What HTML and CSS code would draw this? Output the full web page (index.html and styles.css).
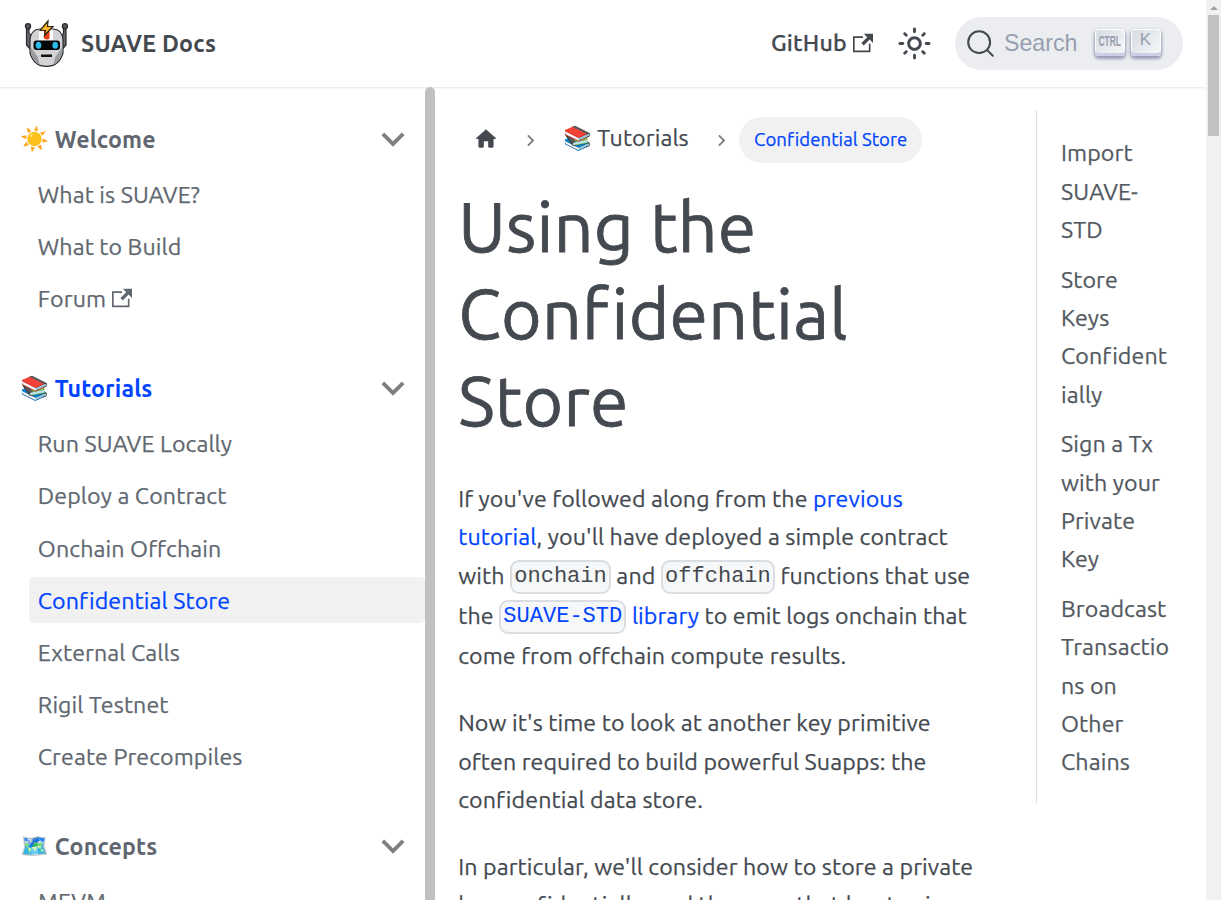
FILE: index.html
```html
<!DOCTYPE html>
<html lang="en">
<head>
<meta charset="utf-8">
<title>Using the Confidential Store | SUAVE Docs</title>
<link rel="stylesheet" href="styles.css">
</head>
<body>
<svg width="0" height="0" class="defs">
  <symbol id="external" viewBox="0 0 24 24"><path fill="currentColor" d="M21 13v10h-21v-19h12v2h-10v15h17v-8h2zm3-12h-10.988l4.035 4-6.977 7.07 2.828 2.828 6.977-7.07 4.125 4.172v-11z"/></symbol>
  <symbol id="chevron" viewBox="0 0 24 24"><path fill="currentColor" d="M7.41 15.41L12 10.83l4.59 4.58L18 14l-6-6-6 6z"/></symbol>
</svg>
<div class="page">
  <div class="view">
    <header class="navbar">
      <svg class="logo" viewBox="0 0 44 50">
        <g stroke="#25272a" stroke-width="1.2" stroke-linejoin="round">
          <path fill="#66696d" d="M2.500 8v18l5.500 6V16l-3-1V8zM42 8v18l-5.500 6V16l3-1V8z"/>
          <circle cx="4" cy="7.300" r="2.600" fill="#55585c"/><circle cx="41" cy="7.300" r="2.600" fill="#55585c"/>
          <path fill="#d2d3d4" d="M6 20Q7 10.500 16 10H29Q38 10.500 39 20V34Q35 47.400 22.500 47.400 10 47.400 6 34Z"/>
        </g>
        <path fill="#999b9e" d="M6.700 28l7 10 2 8Q8 42 6.700 33zM38.300 28l-7 10-2 8q7.700-4 9-13z"/>
        <path fill="#fff" d="M15 10.600h14v11H15z"/><path fill="#ef3b16" d="M20 12h5.500v7.500q-2.700 2-5.500 0z"/>
        <rect x="9.500" y="21.500" width="26.500" height="9.500" rx="3" fill="#050607"/>
        <ellipse cx="14.500" cy="26.200" rx="2.800" ry="3.500" fill="#2dbbea"/><ellipse cx="31.200" cy="26.200" rx="2.800" ry="3.500" fill="#2dbbea"/>
        <path fill="#111" d="M17 35.500h11V38H17z"/>
        <path d="M24 2L16 11.500h5.500L20.500 16.500l8.500-9h-5.500z" fill="#fdb827" stroke="#2b2415" stroke-width="1.200"/>
      </svg>
      <span class="brand">SUAVE Docs</span>
      <a class="github">GitHub<svg class="ext"><use href="#external"/></svg></a>
      <svg class="sun" viewBox="0 0 24 24"><path fill="currentColor" d="M12,9c1.650,0,3,1.350,3,3s-1.350,3-3,3s-3-1.350-3-3S10.350,9,12,9 M12,7c-2.760,0-5,2.240-5,5s2.240,5,5,5s5-2.240,5-5 S14.760,7,12,7L12,7z M2,13l2,0c0.550,0,1-0.450,1-1s-0.450-1-1-1l-2,0c-0.550,0-1,0.450-1,1S1.450,13,2,13z M20,13l2,0c0.550,0,1-0.450,1-1 s-0.450-1-1-1l-2,0c-0.550,0-1,0.450-1,1S19.450,13,20,13z M11,2v2c0,0.550,0.450,1,1,1s1-0.450,1-1V2c0-0.550-0.450-1-1-1S11,1.450,11,2z M11,20v2c0,0.550,0.450,1,1,1s1-0.450,1-1v-2c0-0.550-0.450-1-1-1C11.450,19,11,19.450,11,20z M5.990,4.580c-0.390-0.390-1.030-0.390-1.410,0 c-0.390,0.390-0.390,1.030,0,1.410l1.060,1.060c0.390,0.390,1.030,0.390,1.410,0s0.390-1.030,0-1.410L5.990,4.580z M18.360,16.950 c-0.390-0.390-1.030-0.390-1.410,0c-0.390,0.390-0.390,1.030,0,1.410l1.060,1.060c0.390,0.390,1.030,0.390,1.410,0c0.390-0.390,0.390-1.030,0-1.410 L18.360,16.950z M19.420,5.990c0.390-0.390,0.390-1.030,0-1.410c-0.390-0.390-1.030-0.390-1.410,0l-1.060,1.060c-0.390,0.390-0.390,1.030,0,1.410 s1.030,0.390,1.410,0L19.420,5.990z M7.050,18.360c0.390-0.390,0.390-1.030,0-1.410c-0.390-0.390-1.030-0.390-1.410,0l-1.060,1.060 c-0.390,0.390-0.390,1.030,0,1.410s1.030,0.390,1.410,0L7.050,18.360z"/></svg>
      <button class="search">
        <svg class="lens" viewBox="0 0 20 20"><path d="M14.386 14.386l4.088 4.088-4.088-4.088c-2.942 2.942-7.711 2.942-10.653 0s-2.942-7.711 0-10.653 7.711-2.942 10.653 0 2.942 7.711 0 10.653z" stroke="currentColor" fill="none" stroke-linecap="round" stroke-linejoin="round" stroke-width="1.400"/></svg>
        <span class="hint">Search</span>
        <kbd><svg class="ctrl" viewBox="0 0 24 20"><text x="0.500" y="15.500" textLength="22.500" lengthAdjust="spacingAndGlyphs">CTRL</text></svg></kbd>
        <kbd class="k">K</kbd>
      </button>
    </header>
    <div class="body">
      <nav class="sidebar">
        <section>
          <h2><span class="emoji">☀️</span><span class="name">Welcome</span><svg class="chev"><use href="#chevron"/></svg></h2>
          <a class="item">What is SUAVE?</a>
          <a class="item">What to Build</a>
          <a class="item">Forum<svg class="ext"><use href="#external"/></svg></a>
        </section>
        <section>
          <h2 class="on"><span class="emoji">📚</span><span class="name">Tutorials</span><svg class="chev"><use href="#chevron"/></svg></h2>
          <a class="item">Run SUAVE Locally</a>
          <a class="item">Deploy a Contract</a>
          <a class="item">Onchain Offchain</a>
          <a class="item active">Confidential Store</a>
          <a class="item">External Calls</a>
          <a class="item">Rigil Testnet</a>
          <a class="item">Create Precompiles</a>
        </section>
        <section>
          <h2><span class="emoji">🗺️</span><span class="name">Concepts</span><svg class="chev"><use href="#chevron"/></svg></h2>
          <a class="item">MEVM</a>
        </section>
      </nav>
      <div class="sidebar-scroll"></div>
      <main>
        <div class="crumbs">
          <svg class="home" viewBox="0 0 24 24"><path fill="currentColor" d="M10 19v-5h4v5c0 .55.45 1 1 1h3c.55 0 1-.45 1-1v-7h1.700c.46 0 .68-.57.33-.87L12.670 3.600c-.38-.34-.96-.34-1.340 0l-8.360 7.530c-.34.3-.13.87.33.87H5v7c0 .55.45 1 1 1h3c.55 0 1-.45 1-1z"/></svg>
          <svg class="sep"><use href="#chevron"/></svg>
          <span class="emoji">📚</span><span class="crumb">Tutorials</span>
          <svg class="sep second"><use href="#chevron"/></svg>
          <span class="pill">Confidential Store</span>
        </div>
        <h1>Using the<br>Confidential<br>Store</h1>
        <p>If you've followed along from the <a>previous<br>tutorial</a>, you'll have deployed a simple contract<br>
          <span class="tall">with <code>onchain</code> and <code>offchain</code> functions that use</span>
          <span class="tall">the <a><code>SUAVE-STD</code> library</a> to emit logs onchain that</span>
          come from offchain compute results.</p>
        <p>Now it's time to look at another key primitive<br>often required to build powerful Suapps: the<br>confidential data store.</p>
        <p>In particular, we'll consider how to store a private<br>key confidentially, and the ways that key to sign</p>
      </main>
      <aside class="toc">
        <a>Import<br>SUAVE-<br>STD</a>
        <a>Store<br>Keys<br>Confident<br>ially</a>
        <a>Sign a Tx<br>with your<br>Private<br>Key</a>
        <a>Broadcast<br>Transactio<br>ns on<br>Other<br>Chains</a>
      </aside>
    </div>
  </div>
  <div class="scrollbar"><i class="arrow"></i><i class="thumb"></i></div>
</div>
</body>
</html>
```
FILE: styles.css
```css
* { box-sizing: border-box; }
body { margin: 0; background: #fff; color: #444950; font: 400 23.2px/38.28px Ubuntu, "Noto Sans", sans-serif; letter-spacing: .11px; -webkit-text-stroke: .25px currentColor; overflow: hidden; }
.defs { display: block; }
.page { display: flex; height: 900px; overflow: hidden; }
.view { width: 1206px; display: flex; flex-direction: column; }
svg { flex: none; display: block; }

.navbar { height: 87px; flex: none; display: flex; align-items: center; padding-left: 24px; box-shadow: 0 1px 2px rgba(0,0,0,.1); }
.logo { width: 44px; height: 50px; }
.brand { font-weight: 700; margin-left: 13px; width: 690px; letter-spacing: .25px; -webkit-text-stroke: 0; }
.github { display: flex; align-items: center; font-weight: 500; width: 127px; margin-top: -2px; letter-spacing: .2px; }
.ext { width: 20px; height: 20px; margin: 0 0 0 6px; }
.sun { width: 35px; height: 35px; margin-left: -1px; }
.search { display: flex; align-items: center; width: 228px; height: 53px; margin-left: 23px; padding: 0 0 0 11px; border: 0; border-radius: 27px; background: #ebedf0; color: #969faf; -webkit-text-stroke: 0; }
.lens { width: 29px; height: 29px; color: #444950; }
.hint { font: 23.2px/28px "Liberation Sans", sans-serif; margin-left: 9px; width: 90.500px; text-align: left; margin-top: -1px; }
kbd { width: 30px; height: 27px; display: flex; align-items: center; justify-content: center; border-radius: 4px; background: linear-gradient(-225deg, #d5dbe4, #f8f8f8); box-shadow: inset 0 -3px 0 0 #cdcde6, inset 0 0 1px 1px #fff, 0 2px 3px 1px rgba(30,35,90,.4); padding-bottom: 3px; margin: -3px 6px 0 0; font: 17px/20px "Liberation Sans", sans-serif; }
.k { padding-bottom: 4px; }
.ctrl { width: 24px; height: 20px; font: 700 14.5px "Liberation Sans", sans-serif; fill: #969faf; }
.ctrl { margin-top: -1px; }

.body { flex: 1; min-height: 0; display: flex; }
.sidebar { width: 425px; flex: none; padding-top: 26px; color: #606770; overflow: hidden; }
.sidebar section { display: flex; flex-direction: column; gap: 6.2px; padding: 0 0 40.500px 29px; }
.sidebar h2 { height: 52.200px; margin: 0 0 0 -8.2px; display: flex; align-items: center; font-size: 23.2px; font-weight: 700; letter-spacing: .15px; -webkit-text-stroke: 0; }
.sidebar h2.on, .active, main a { color: #0044ff; }
.emoji { width: 34px; flex: none; font-family: "Noto Color Emoji", sans-serif; -webkit-text-stroke: 0; }
.name { flex: 1; }
.chev { width: 46px; height: 46px; color: #808080; transform: rotate(180deg); margin-right: 9px; }
.item { height: 46px; flex: none; display: flex; align-items: center; padding: 0 0 .6px 8.800px; border-radius: 5px; }
.item.active { background: #f1f1f1; color: #0044ff; }
.sidebar-scroll { width: 10px; flex: none; background: #c0c0c0; border-radius: 5px 5px 0 0; }

main { width: 601px; flex: none; padding: 30px 0 0 23.2px; white-space: nowrap; }
.crumbs { height: 46px; display: flex; align-items: center; }
.home { width: 26px; height: 26px; margin: -2px 0 0 14.500px; }
.sep { width: 23px; height: 23px; transform: rotate(90deg); color: #808080; margin: 0 21px 0 20.500px; }
.crumbs .emoji { margin-top: -4px; }
.crumb { width: 92px; margin-top: -5px; }
.sep.second { margin: 0 6px 0 21px; }
.pill { width: 183px; height: 46px; border-radius: 23px; background: #f1f1f1; color: #0044ff; display: flex; align-items: center; justify-content: center; font-size: 18.56px; letter-spacing: .06px; }
h1 { font-size: 69.6px; line-height: 87px; font-weight: 400; margin: 19.500px 0 35.500px; letter-spacing: .28px; -webkit-text-stroke: .8px currentColor; }
p { margin: 0 0 29px; }
.tall { display: block; height: 40px; line-height: 39px; }
.tall + .tall { margin-bottom: .4px; }
code { display: inline-block; height: 34px; border: 2px solid #dadde1; border-radius: 9px; background: #f6f7f8; padding: 1px 2.200px 0; font: 400 22.04px/28px "Liberation Mono", monospace; letter-spacing: 0; vertical-align: middle; margin-top: -1px; -webkit-text-stroke: 0; }
.toc { width: 146px; margin-top: 23px; height: 693px; border-left: 1px solid #dadde1; padding: 23.250px 0 0 24px; display: flex; flex-direction: column; gap: 11.600px; color: #525860; white-space: nowrap; }

.scrollbar { width: 15px; background: #f1f1f1; display: flex; flex-direction: column; align-items: center; }
.arrow { border: 4px solid transparent; border-top: 0; border-bottom: 4px solid #a3a3a3; margin-top: 6px; }
.thumb { width: 11px; height: 121px; background: #c1c1c1; margin-top: 5px; }
```
